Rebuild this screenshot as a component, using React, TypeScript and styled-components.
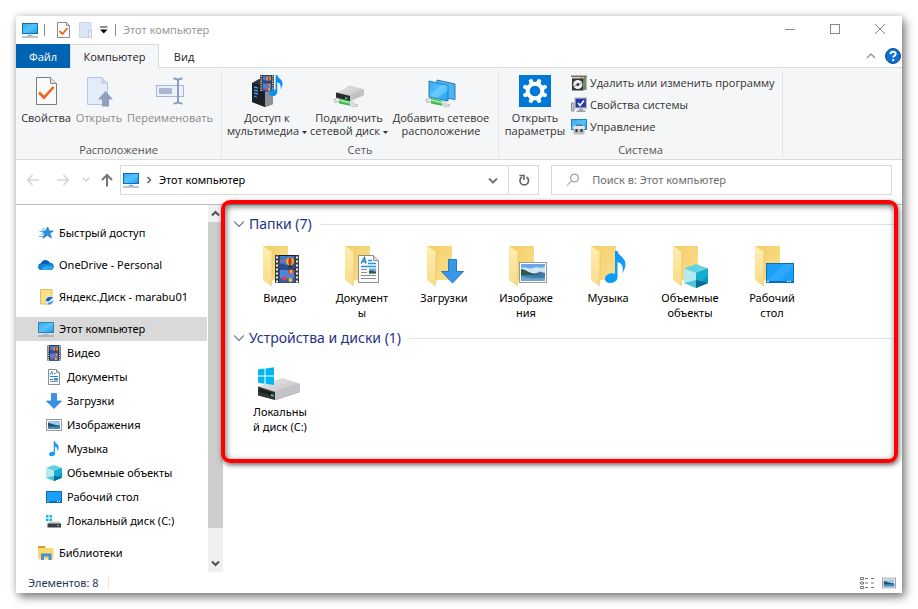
import React from "react";
import styled, { createGlobalStyle } from "styled-components";

const GlobalStyle = createGlobalStyle`
  * { box-sizing: border-box; }
  body { margin: 0; background: #fff; }
  button, input { font: inherit; color: inherit; }
`;

/* ---------- layout ---------- */

const Page = styled.div`
  min-height: 100vh;
  padding: 16px;
  display: flex;
  font: 11px/16px "Noto Sans", "Open Sans", sans-serif;
  color: #000;
`;

const Window = styled.div`
  flex: 1;
  min-width: 0;
  display: flex;
  flex-direction: column;
  background: #fff;
  box-shadow: 3px 4px 9px rgba(0, 0, 0, 0.5), 0 0 7px rgba(0, 0, 0, 0.12);
`;

const PlainButton = styled.button`
  border: 0;
  padding: 0;
  background: transparent;
  display: flex;
  align-items: center;
  justify-content: center;
`;

const TitleBar = styled.header`
  display: flex;
  align-items: center;
  height: 28px;
  padding-left: 6px;
`;

const QuickTools = styled.div`
  display: flex;
  align-items: center;
  gap: 6px;
`;

const QuickButton = styled(PlainButton)<{ $width?: number }>`
  width: ${(p) => p.$width ?? 16}px;
  height: 20px;
`;

const Rule = styled.span<{ $pale?: boolean; $after?: number }>`
  width: 1px;
  height: 12px;
  margin-right: ${(p) => p.$after ?? 0}px;
  background: ${(p) => (p.$pale ? "#e3e3e3" : "#8c8c8c")};
`;

const Title = styled.h1`
  flex: 1;
  margin: 0 0 0 7px;
  font-size: inherit;
  font-weight: 400;
  color: #999;
`;

const CaptionButton = styled(PlainButton)`
  width: 45px;
  height: 24px;
`;

const TabBar = styled.div`
  display: flex;
  height: 24px;
  border-bottom: 1px solid #dadbdc;
`;

const Tab = styled.button<{ $kind: "file" | "active" | "idle"; $width: number }>`
  width: ${(p) => p.$width}px;
  height: 24px;
  padding: 0;
  border: 1px solid ${(p) => (p.$kind === "active" ? "#dadbdc" : "transparent")};
  border-bottom: 0;
  background: ${(p) => (p.$kind === "file" ? "#0063b1" : p.$kind === "active" ? "#f5f6f7" : "transparent")};
  font-family: "Open Sans", sans-serif;
  color: ${(p) => (p.$kind === "file" ? "#fff" : "#222")};
`;

const TabTools = styled.div`
  margin-left: auto;
  display: flex;
  align-items: center;
  gap: 9px;
  padding-right: 1px;
`;

const Ribbon = styled.div`
  display: flex;
  padding: 2px 0;
  background: #f5f6f7;
  border-bottom: 1px solid #dadbdc;
  font-family: "Open Sans", sans-serif;
`;

const Group = styled.section<{ $width: number }>`
  width: ${(p) => p.$width}px;
  height: 87px;
  display: flex;
  flex-direction: column;
  justify-content: space-between;
  border-right: 1px solid #e2e3e4;
  padding: 2px 3px 0;
`;

const GroupBody = styled.div`
  display: flex;
`;

const GroupName = styled.h2`
  margin: 0;
  font-size: inherit;
  line-height: 14px;
  font-weight: 400;
  text-align: center;
  color: #555;
`;

const BigButton = styled.button<{ $width: number }>`
  width: ${(p) => p.$width}px;
  padding: 3px 0 0;
  border: 0;
  background: transparent;
  display: flex;
  flex-direction: column;
  align-items: center;
  gap: 4px;
  line-height: 13px;
  white-space: pre;
  color: #333;
  &:disabled { color: #8a8a8a; }
`;

const SmallButtons = styled.div`
  display: flex;
  flex-direction: column;
  padding-left: 3px;
`;

const SmallButton = styled.button`
  display: flex;
  align-items: center;
  gap: 3px;
  height: 22px;
  padding: 0;
  border: 0;
  background: transparent;
  white-space: nowrap;
  color: #333;
`;

const NavBar = styled.div`
  display: flex;
  padding: 5px 10px 9px 2px;
  border-bottom: 1px solid #b9b9b9;
`;

const NavButton = styled(PlainButton)<{ $width: number }>`
  width: ${(p) => p.$width}px;
  height: 30px;
`;

const Address = styled.div`
  flex: 1;
  height: 30px;
  display: flex;
  align-items: center;
  border: 1px solid #d9d9d9;
  padding-left: 2px;
`;

const Crumb = styled(PlainButton)`
  flex: 1;
  justify-content: flex-start;
  gap: 7px;
`;

const AddressButton = styled(PlainButton)<{ $edge?: boolean }>`
  width: 30px;
  height: 28px;
  border-left: ${(p) => (p.$edge ? "1px solid #d9d9d9" : "0")};
`;

const Search = styled.label`
  width: 39%;
  height: 30px;
  margin-left: 12px;
  display: flex;
  align-items: center;
  gap: 12px;
  border: 1px solid #d9d9d9;
  padding-left: 14px;
`;

const SearchInput = styled.input`
  flex: 1;
  min-width: 0;
  border: 0;
  padding: 0;
  outline: 0;
  background: transparent;
  &::placeholder { color: #6d6d6d; opacity: 1; }
`;

const Main = styled.div`
  flex: 1;
  display: flex;
`;

const Tree = styled.nav`
  width: 191px;
  padding: 16px 0 7px;
`;

const TreeList = styled.ul`
  list-style: none;
  margin: 0;
  padding: 0;
`;

const TreeItem = styled.li<{ $spaced?: boolean }>`
  margin-bottom: ${(p) => (p.$spaced ? 8 : 0)}px;
`;

const TreeLink = styled.a<{ $child?: boolean; $selected?: boolean }>`
  display: flex;
  align-items: center;
  gap: 5px;
  height: 24px;
  padding-left: ${(p) => (p.$child ? 30 : 22)}px;
  background: ${(p) => (p.$selected ? "#d9d9d9" : "transparent")};
  color: #000;
  text-decoration: none;
  white-space: nowrap;
`;

const ScrollBar = styled.div`
  width: 15px;
  margin-left: 1px;
  display: flex;
  flex-direction: column;
  background: #f0f0f0;
`;

const ScrollButton = styled(PlainButton)`
  height: 17px;
`;

const ScrollTrack = styled.div`
  flex: 1;
`;

const ScrollThumb = styled.div`
  height: 92%;
  background: #cdcdcd;
`;

const Content = styled.main`
  flex: 1;
  min-width: 0;
`;

const Highlight = styled.div`
  position: relative;
  margin-right: 4px;
  padding: 6px 4px 29px 11px;
  &::after {
    content: "";
    position: absolute;
    inset: -5px 0 0 -2px;
    border: 4px solid #fe0000;
    border-radius: 9px;
    box-shadow: 1px 2px 5px rgba(0, 0, 0, 0.6), inset 1px 2px 6px rgba(0, 0, 0, 0.6);
    pointer-events: none;
  }
`;

const FileGroup = styled.section`
  & + & { margin-top: 5px; }
`;

const FileHeading = styled.h2`
  display: flex;
  align-items: center;
  gap: 5px;
  height: 26px;
  margin: 0 0 3px;
  font-size: 14px;
  font-weight: 400;
  color: #1e3287;
  white-space: nowrap;
  &::after {
    content: "";
    flex: 1;
    height: 1px;
    margin-left: 3px;
    background: #e2e2e2;
  }
`;

const FileGrid = styled.div`
  display: grid;
  grid-template-columns: repeat(auto-fill, 82px);
  padding-left: 5px;
`;

const FileTile = styled.button`
  height: 80px;
  padding: 0;
  border: 0;
  background: transparent;
  display: flex;
  flex-direction: column;
  align-items: center;
  gap: 2px;
  line-height: 15px;
  text-align: center;
  white-space: pre;
`;

const StatusBar = styled.footer`
  height: 21px;
  display: flex;
  align-items: center;
  gap: 9px;
  padding: 0 6px 0 12px;
  color: #1e395b;
`;

const ViewButtons = styled.div`
  margin-left: auto;
  display: flex;
  gap: 6px;
`;

/* ---------- icons ---------- */

const DefsSvg = styled.svg`
  position: absolute;
`;

const Defs = () => (
  <DefsSvg width="0" height="0" aria-hidden="true">
    <defs>
      <linearGradient id="screen" x1="0" y1="0" x2="1" y2="1">
        <stop offset="0" stopColor="#36a7ee" />
        <stop offset=".5" stopColor="#55c2fb" />
        <stop offset="1" stopColor="#1c9af0" />
      </linearGradient>
      <linearGradient id="folderBack" x1="0" y1="0" x2="1" y2="1">
        <stop offset="0" stopColor="#f3cf69" />
        <stop offset="1" stopColor="#fbdf8c" />
      </linearGradient>
      <linearGradient id="folderFront" x1="0" y1="0" x2="0" y2="1">
        <stop offset="0" stopColor="#ffedb0" />
        <stop offset="1" stopColor="#f9dc88" />
      </linearGradient>
      <linearGradient id="metal" x1="0" y1="0" x2="1" y2="1">
        <stop offset="0" stopColor="#e9e9ea" />
        <stop offset="1" stopColor="#c0c1c4" />
      </linearGradient>
    </defs>
  </DefsSvg>
);

type IconProps = { w: number; h?: number; box: string; children: React.ReactNode };
const Icon = ({ w, h = w, box, children }: IconProps) => (
  <svg width={w} height={h} viewBox={box} fill="none" aria-hidden="true">
    {children}
  </svg>
);

const MonitorIcon = ({ bright = false }: { bright?: boolean }) => (
  <Icon w={16} box="0 0 16 16">
    <rect x=".5" y="1.5" width="15" height="10" fill="url(#screen)" stroke={bright ? "#0b6fb5" : "#3a7fae"} />
    <path d="M5.5 13.5h5" stroke="#8db4d4" />
    <path d="M0 15h16" stroke="#8a9fb2" strokeWidth="1.2" />
    <path d="M7 12h2v1H7z" fill="#c4d6e6" />
  </Icon>
);

const PageCheckIcon = () => (
  <Icon w={13} h={16} box="0 0 13 16">
    <path d="M.5.5h9l3 3v12H.5z" fill="#fafafa" stroke="#8a8a8a" />
    <path d="M9.5.5v3h3" fill="#ddd" stroke="#8d8d8d" />
    <path d="M2.500 9l3 3 5-6" stroke="#f2611c" strokeWidth="1.800" />
  </Icon>
);

const PropertiesIcon = () => (
  <Icon w={32} box="0 0 32 32">
    <path d="M6.500 2.500h14l6 6v21h-20z" fill="#fafafa" stroke="#7d7d7d" />
    <path d="M20.500 2.500v6h6" fill="#ddd" stroke="#8d8d8d" />
    <path d="M9 17.500l5 5 9.500-10.500" stroke="#f2611c" strokeWidth="2.600" />
  </Icon>
);

const BlankDoc = () => (
  <Icon w={13} h={16} box="0 0 13 16">
    <path d="M.5.500h11.500V10h-2v5.500H.5z" fill="#dbe5f5" stroke="#c9d6ec" />
    <path d="M9.500 8.500h3v7h-3z" fill="#e8eefa" stroke="#bccbe3" />
  </Icon>
);

const OpenIcon = () => (
  <Icon w={28} h={32} box="0 0 28 32">
    <path d="M2.500 2.500h14.500l5.500 5.500v21.500h-20z" fill="#e4ecf9" stroke="#b7c6e0" />
    <path d="M17 2.500V8h5.500" fill="#cdd9ee" stroke="#b7c6e0" />
    <path d="M20.500 16l7.500 8.500h-4V31.500h-7v-7h-4z" fill="#8f9fc0" />
  </Icon>
);

const RenameIcon = () => (
  <Icon w={30} h={32} box="0 0 30 32">
    <rect x="1.500" y="10.500" width="27" height="11" fill="#eaf0fa" stroke="#a5b5d4" />
    <rect x="4" y="13" width="13" height="6" fill="#a9b7d3" />
    <path d="M18.500 3.500c3 0 4.500.5 4.500 2.500v20c0 2-1.500 2.500-4.500 2.500M27.500 3.500c-3 0-4.500.5-4.500 2.500v20c0 2 1.500 2.500 4.500 2.500" stroke="#8d9dbf" strokeWidth="2" />
  </Icon>
);

const NotePath = ({ fill = "#0f8ff0" }: { fill?: string }) => (
  <path d="M10 0h2.500c.6 4.500 8 6.500 8 13 0 3-1.200 6-3.200 9.500C18.500 17 18 12.500 12.500 11v15c0 3.500-3.200 6-7 6S0 30.500 0 27.800c0-3 3.200-5.500 7-5.500 1.200 0 2.200.2 3 .6z" fill={fill} />
);

const FilmArt = () => (
  <>
    <rect width="24" height="28" fill="#3c3a3b" />
    <rect x="4" width="16" height="28" fill="#111b38" />
    <rect x="4.500" y="1" width="15" height="12.500" fill="#3d78d0" />
    <rect x="4.500" y="14.500" width="15" height="13" fill="#4c86d9" />
    <path d="M4.500 9c2-2 4 2 8 0s5 1 7 0v4.500h-15z" fill="#254c9a" />
    <path d="M5 7c2-3 5 0 6-2" stroke="#d3568d" strokeWidth="1.500" />
    <circle cx="15" cy="6.500" r="4" fill="#f0ad20" />
    <path d="M14 2.800c-.8 3-.8 5 0 7.400h2c.8-2.400.8-4.400 0-7.400" fill="#b7352b" />
    <path d="M13.500 10.500h3v2h-3z" fill="#402a10" />
    <path d="M12.500 15h7l-3 5h-1.500z" fill="#e23d30" />
    <path d="M15 15h2l-.5 4h-1z" fill="#ffd23c" />
    <path d="M4.500 24c3-2 5 1 15-1v4.500h-15z" fill="#315caa" />
    <circle cx="9.500" cy="23.500" r="2.200" fill="#e84335" />
    <circle cx="15.500" cy="25" r="2" fill="#f5c331" />
    <path d="M2 1.500v26M22 1.500v26" stroke="#f1f1f1" strokeWidth="2" strokeDasharray="2 2" />
  </>
);

const MediaIcon = () => (
  <Icon w={32} box="0 0 32 32">
    <path d="M1 8l7-4 14 3v22l-8 3L1 27z" fill="#33363b" />
    <path d="M14 11l8-3v21l-8 3z" fill="#8d9096" />
    <path d="M1 8l13 3v21L1 27z" fill="#1d2024" />
    <path d="M3 12l4 1M3 15l4 1M3 18l4 1M3 21l3 1" stroke="#3d9cf0" strokeWidth="1.300" />
    <g transform="translate(9 0) scale(.58)"><FilmArt /></g>
    <g transform="translate(18 0) scale(.66)"><NotePath /></g>
  </Icon>
);

const Cable = () => (
  <>
    <path d="M1 24.500l5-1.500 1 3-5 1.500zM20 28.500l5 1.500-1.500 2-5-1z" fill="#ececec" stroke="#a7a7a7" strokeWidth=".8" />
    <path d="M6 23l12 3v5L6 28.500z" fill="#46b95a" />
    <path d="M6 25l12 3" stroke="#9ff0a8" strokeWidth="1.500" />
    <path d="M17 26h4v5.500h-4z" fill="#d9dadb" />
  </>
);

const NetDriveIcon = () => (
  <Icon w={32} box="0 0 32 32">
    <Cable />
    <path d="M3 18.500L17 11l14 3.500v5.500l-13 5.500L3 22.500z" fill="#8b8d90" />
    <path d="M3 17.500L18 11l13 3.500-14 6.500z" fill="url(#metal)" />
    <path d="M3 17.500L17 21v5L3 22.500z" fill="#2b2c2e" />
    <path d="M17 21l14-6.500V20l-14 6z" fill="#c1c3c6" />
    <path d="M12 23l2.500.6" stroke="#44e070" strokeWidth="1.500" />
  </Icon>
);

const NetPlaceIcon = () => (
  <Icon w={32} box="0 0 32 32">
    <path d="M12 5l18 4v15.500l-18-3z" fill="#4bb5f5" stroke="#237cb5" />
    <Cable />
    <path d="M4 6l19 4.500V26L4 22z" fill="url(#screen)" stroke="#2580b8" />
    <path d="M5 20L17 9.500l5.500 1.300V16L12 23z" fill="#7fd0ff" opacity=".45" />
  </Icon>
);

const SettingsIcon = () => (
  <Icon w={32} box="0 0 32 32">
    <rect width="32" height="32" fill="#0078d7" />
    <circle cx="16" cy="16" r="7.300" stroke="#fff" strokeWidth="4" />
    {[0, 45, 90, 135, 180, 225, 270, 315].map((a) => (
      <path key={a} d="M13.500 8l.8-4.500h3.400l.8 4.500z" fill="#fff" transform={`rotate(${a + 22.500} 16 16)`} />
    ))}
  </Icon>
);

const UninstallIcon = () => (
  <Icon w={16} box="0 0 16 16">
    <path d="M1 1h14v14H1z" fill="#d4d1be" />
    <path d="M0 .5h16v1.500H0z" fill="#6f716d" />
    <path d="M9 2l6 1v6l-5-2z" fill="#d8a95a" />
    <path d="M13 2h2.500v13H13z" fill="#6f8c6e" />
    <rect x="1" y="3.500" width="11.500" height="12" fill="#34363a" />
    <circle cx="6.800" cy="9.500" r="4.600" fill="#f2f3f4" />
    <path d="M6.800 9.500l3.500-3 .8 3zM6.800 9.500l-3.300 3-.8-3z" fill="#b8bfc6" />
    <circle cx="6.800" cy="9.500" r="1.500" fill="#34363a" />
  </Icon>
);

const SystemIcon = () => (
  <Icon w={16} box="0 0 16 16">
    <path d="M.5 6h2.500v8H.5z" fill="#c9cccd" stroke="#85898c" />
    <rect x="4" y="1" width="11.500" height="10" fill="#2338a5" stroke="#b8babd" strokeWidth="1.300" />
    <path d="M7 6l2 2.500 4-5" stroke="#fff" strokeWidth="1.600" />
    <path d="M8 12h4v1.500h2.500V15h-9v-1.500H8z" fill="#9b9ea1" />
  </Icon>
);

const ManageIcon = () => (
  <Icon w={16} box="0 0 16 16">
    <rect x=".5" y=".5" width="15" height="10" fill="url(#screen)" stroke="#2a84bd" />
    <path d="M5.500 7V6h5v1" stroke="#555" />
    <rect x="2.500" y="7" width="11" height="8.500" rx="1" fill="#b9bec3" />
    <rect x="2.500" y="7" width="11" height="3" fill="#e6e8ea" />
    <path d="M4.500 10h2v3h-2zM9.500 10h2v3h-2z" fill="#333" />
  </Icon>
);

const StarIcon = () => (
  <Icon w={16} box="0 0 16 16">
    <path d="M9.800 2l1.300 4 4.200-.1-3.400 2.500 1.600 4.600-4.200-2.700-4.300 2.900 1.700-4.600L3.500 6h4z" fill="#2493e6" stroke="#1473bd" strokeWidth=".7" />
    <path d="M4 4h3M1.500 6.500h4M3 9h3M1 11.500h4" stroke="#6cb9ee" />
  </Icon>
);

const CloudIcon = () => (
  <Icon w={16} box="0 0 16 16">
    <path d="M3.500 13a3.400 3.400 0 0 1-.6-6.700A5 5 0 0 1 12 5.700 3.700 3.700 0 0 1 12.500 13z" fill="#0a5fb5" />
    <path d="M3.500 13a3.300 3.300 0 0 1-3-4.700C4 6 9 8 12 5.700 17 6 17 13 12.500 13z" fill="#1481d7" />
    <path d="M3 13c2-4 5-5.500 8.500-4C15 8 17 12 13 13z" fill="#2ba6ef" />
  </Icon>
);

const YandexIcon = () => (
  <Icon w={16} box="0 0 16 16">
    <path d="M2.500.5h11.500v14.500H2.500z" fill="#fce08c" stroke="#e6bd52" />
    <circle cx="12" cy="11.500" r="4.500" fill="#eaf2fb" />
    <path d="M7.500 12c1-4 5-5.500 8-3-2.500 0-3 2.500-5 3.500z" fill="#1763b8" />
    <path d="M9 15c3 1.500 6-.5 6.500-4-2 2-4 2-6.500 4z" fill="#2c98ea" />
  </Icon>
);

const FilmIcon = () => (
  <Icon w={16} box="-2 -.500 28 29"><FilmArt /></Icon>
);

const DocArt = () => (
  <>
    <path d="M.5.500h15l5 5v22H.5z" fill="#fbfbfb" stroke="#8e8e8e" />
    <path d="M15.500.500v5h5" fill="#ddd" stroke="#8e8e8e" />
    <path d="M3 8.500l3.500-6 1.500 6M4.500 6.500h3" stroke="#1c7cc8" strokeWidth="1.300" />
    <path d="M10 5.500h4M10 8.500h8M3 11.500h15" stroke="#2196e8" strokeWidth="1.300" />
    <path d="M3 14.500h6M3 17.500h6M3 20.500h15M3 23.500h15" stroke="#8f8f8f" />
    <path d="M11 13.500h7v5h-7z" fill="#6aa9e0" />
    <path d="M11 16l3-.5 4 1.500v1.500h-7z" fill="#355c4a" />
  </>
);

const DocIcon = () => (
  <Icon w={16} box="0 0 16 16">
    <path d="M2.500.5h8l3 3v12h-11z" fill="#fbfbfb" stroke="#8e8e8e" />
    <path d="M10.500.5v3h3" fill="#ddd" stroke="#8e8e8e" />
    <path d="M4 5.500l2-3 .5 3M8 4.500h1.500M4 7.500h8M4 10.500h3" stroke="#1c88dc" />
    <path d="M4 12.500h8" stroke="#8c9aa8" />
    <path d="M8 9h4v2.500H8z" fill="#3f8fcf" />
  </Icon>
);

const ArrowIcon = () => (
  <Icon w={16} box="0 0 16 16">
    <path d="M5.500.5h5V8h5L8 15.500.5 8h5z" fill="#3494e6" stroke="#2778c2" strokeWidth=".7" />
  </Icon>
);

const PictureArt = () => (
  <>
    <rect x=".5" y=".5" width="27" height="20" fill="#fff" stroke="#9a9a9a" />
    <rect x="2" y="2" width="24" height="17" fill="#6fa8e8" />
    <path d="M2 6c6-2 8 2 12 0s8 1 12-1v6H2z" fill="#d4e6f5" />
    <path d="M2 7c4 0 7 3.500 13 5h11v1.500H2z" fill="#2d5b45" />
    <path d="M15 12l6-2.500 5 1.500v2z" fill="#56779d" />
    <path d="M2 13h24v6H2z" fill="#3b7db4" />
    <path d="M2 14c5 1 7 3 24 2v3H2z" fill="#8cc1d9" opacity=".6" />
  </>
);

const PictureIcon = ({ size = 16 }: { size?: number }) => (
  <Icon w={size} box="0 0 16 16">
    <rect x=".5" y="2.500" width="15" height="11" fill="#fff" stroke="#9a9a9a" />
    <rect x="2" y="4" width="12" height="8" fill="#9cc9f0" />
    <path d="M2 6c3 0 5 2 12 2.500V10H2z" fill="#27505c" />
    <path d="M2 9.500h12V12H2z" fill="#3f8cc4" />
  </Icon>
);

const MusicIcon = () => (
  <Icon w={16} box="-6.500 -.500 34 34"><NotePath fill="#0c9bfa" /></Icon>
);

const CubeArt = () => (
  <>
    <path d="M12 0l12 4.500L12 9 0 4.500z" fill="#5fd3e0" />
    <path d="M0 4.500L12 9v15L0 19z" fill="#b4e9f0" />
    <path d="M24 4.500L12 9v15l12-5z" fill="#0099c4" />
    <path d="M12 9l12-4.500V11L12 24z" fill="#17acd2" />
    <path d="M12 24V16l12 3z" fill="#006c96" />
    <path d="M0 19l12-3v8z" fill="#4fc4d6" />
  </>
);

const CubeIcon = () => (
  <Icon w={16} box="0 0 24 24"><CubeArt /></Icon>
);

const DesktopArt = () => (
  <>
    <rect x=".5" y=".5" width="27" height="19" fill="#18a0fb" stroke="#0b6fb8" />
    <path d="M1 17L18 1h9v4L11 19H1z" fill="#3fb0ff" opacity=".5" />
    <path d="M1 18.500h26" stroke="#0b6fb8" />
    <path d="M1 18.500h2M21 18.500h1.500M23.500 18.500H25" stroke="#fff" />
  </>
);

const DesktopIcon = () => (
  <Icon w={16} box="0 0 16 16">
    <rect x=".5" y="2.500" width="15" height="11" fill="#18a0fb" stroke="#0b6fb8" />
    <path d="M1 12.500h14" stroke="#0b6fb8" />
    <path d="M11 12.500h1M13 12.500h1M1.500 12.500h1" stroke="#fff" />
  </Icon>
);

const DriveSmallIcon = () => (
  <Icon w={16} box="0 0 16 16">
    <path d="M0 2h2.500v2.500H0zM3.500 2H6v2.500H3.500zM0 5.500h2.500V8H0zM3.500 5.500H6V8H3.500z" fill="#12b5ee" />
    <path d="M4 8.500h9l2 2.500H1.500z" fill="#c9cbcd" />
    <rect x="1.500" y="10.500" width="13.500" height="4" fill="#3b3d40" />
    <path d="M11 12.500h2" stroke="#45df70" />
  </Icon>
);

const LibraryIcon = () => (
  <Icon w={16} box="0 0 16 16">
    <path d="M0 1h6.500l1 2H15.500v11.500H0z" fill="#fbd86f" />
    <path d="M0 1h6.500l1 2H0z" fill="#d79a2b" />
    <path d="M3 15V8.500h10.500V15h-3v-3.500H6V15z" fill="#3f92de" />
  </Icon>
);

const Folder = ({ children }: { children: React.ReactNode }) => (
  <Icon w={48} box="0 0 48 48">
    <path d="M7 6h25v34H7z" fill="url(#folderBack)" />
    <path d="M7 6l9 6v28l-1 6-8-6z" fill="url(#folderFront)" />
    <path d="M16 12v28l-1 6" stroke="#e8c060" strokeWidth=".7" />
    {children}
  </Icon>
);

const DriveIcon = () => (
  <Icon w={48} box="0 0 48 48">
    <path d="M2 33L26 24.500l18 5.500v8L20 46 2 41z" fill="#9c9ea1" />
    <path d="M2 32.500l24-8 18 5.500-25 8z" fill="url(#metal)" />
    <path d="M19 38l25-8v7.500L19 46z" fill="#c2c4c7" />
    <path d="M2 32.500L19 38v8L2 41.500z" fill="#303236" />
    <path d="M4 35l13.500 4v3L4 38z" fill="#17191b" />
    <path d="M15 40l2.500.7v2L15 42z" fill="#3fdf63" />
    <path d="M2 15.500l6.500-1v7H2zM9.500 14.400l8.500-1.200v8.300H9.500zM2 22.500h6.500v7.300l-6.500-1zM9.500 22.500H18v8.400l-8.500-1.200z" fill="#00b7f1" />
  </Icon>
);

const Arrow = ({ d, color, width = 2 }: { d: string; color: string; width?: number }) => (
  <Icon w={14} box="0 0 14 14">
    <path d={d} stroke={color} strokeWidth={width} />
  </Icon>
);

const SectionChevron = () => (
  <Icon w={10} box="0 0 10 10">
    <path d="M0 2.500l5 5 5-5" stroke="#777" strokeWidth="1.200" />
  </Icon>
);

const CaretSvg = styled.svg`
  vertical-align: middle;
  margin-left: 3px;
`;

const Caret = () => (
  <CaretSvg width="5" height="3" viewBox="0 0 5 3" aria-hidden="true">
    <path d="M0 0h5L2.500 3z" fill="#333" />
  </CaretSvg>
);

const HelpIcon = () => (
  <Icon w={16} box="0 0 16 16">
    <circle cx="8" cy="8" r="7.500" fill="#0f70cf" stroke="#0a4f9a" />
    <path d="M5.500 6.200c0-3.200 5.200-3.100 5.200-.3 0 1.900-2.500 1.900-2.500 3.700M8.200 11v2" stroke="#fff" strokeWidth="1.900" />
  </Icon>
);

/* ---------- data ---------- */

const tree = [
  { name: "Быстрый доступ", icon: <StarIcon />, spaced: true },
  { name: "OneDrive - Personal", icon: <CloudIcon />, spaced: true },
  { name: "Яндекс.Диск - marabu01", icon: <YandexIcon />, spaced: true },
  { name: "Этот компьютер", icon: <MonitorIcon />, selected: true },
  { name: "Видео", icon: <FilmIcon />, child: true },
  { name: "Документы", icon: <DocIcon />, child: true },
  { name: "Загрузки", icon: <ArrowIcon />, child: true },
  { name: "Изображения", icon: <PictureIcon />, child: true },
  { name: "Музыка", icon: <MusicIcon />, child: true },
  { name: "Объемные объекты", icon: <CubeIcon />, child: true },
  { name: "Рабочий стол", icon: <DesktopIcon />, child: true },
  { name: "Локальный диск (C:)", icon: <DriveSmallIcon />, child: true, spaced: true },
  { name: "Библиотеки", icon: <LibraryIcon /> },
];

const folders = [
  { name: "Видео", art: <g transform="translate(19 15)"><FilmArt /></g> },
  { name: "Документ\nы", art: <g transform="translate(20 15)"><DocArt /></g> },
  { name: "Загрузки", art: <path d="M28.500 19.500h8v12h7L32.500 43 21.500 31.500h7z" fill="#3797e8" stroke="#2979c2" /> },
  { name: "Изображе\nния", art: <g transform="translate(17 22)"><PictureArt /></g> },
  { name: "Музыка", art: <g transform="translate(21 11)"><NotePath fill="#0c9bfa" /></g> },
  { name: "Объемные\nобъекты", art: <g transform="translate(18 24)"><CubeArt /></g> },
  { name: "Рабочий\nстол", art: <g transform="translate(18 23)"><DesktopArt /></g> },
];

/* ---------- page ---------- */

export default function App() {
  return (
    <Page>
      <GlobalStyle />
      <Defs />
      <Window>
        <TitleBar>
          <QuickTools>
            <MonitorIcon bright />
            <Rule $after={4} />
            <QuickButton aria-label="Свойства"><PageCheckIcon /></QuickButton>
            <QuickButton aria-label="Новая папка"><BlankDoc /></QuickButton>
            <QuickButton $width={10} aria-label="Настройка панели">
              <Icon w={8} box="0 0 8 8"><path d="M0 1h7.500" stroke="#222" /><path d="M0 3.500h7.500L3.800 7.500z" fill="#000" /></Icon>
            </QuickButton>
            <Rule />
          </QuickTools>
          <Title>Этот компьютер</Title>
          <CaptionButton aria-label="Свернуть"><Icon w={12} box="0 0 12 12"><path d="M1 5.500h10" stroke="#888" /></Icon></CaptionButton>
          <CaptionButton aria-label="Развернуть"><Icon w={12} box="0 0 12 12"><rect x="1.500" y=".5" width="9" height="9" stroke="#888" /></Icon></CaptionButton>
          <CaptionButton aria-label="Закрыть"><Icon w={12} box="0 0 12 12"><path d="M1 0l10 10M11 0L1 10" stroke="#888" /></Icon></CaptionButton>
        </TitleBar>

        <TabBar>
          <Tab $kind="file" $width={54}>Файл</Tab>
          <Tab $kind="active" $width={89}>Компьютер</Tab>
          <Tab $kind="idle" $width={50}>Вид</Tab>
          <TabTools>
            <PlainButton aria-label="Свернуть ленту"><Icon w={10} box="0 0 10 10"><path d="M1 7l4-4 4 4" stroke="#999" strokeWidth="1.500" /></Icon></PlainButton>
            <PlainButton aria-label="Справка"><HelpIcon /></PlainButton>
          </TabTools>
        </TabBar>

        <Ribbon>
          <Group $width={206}>
            <GroupBody>
              <BigButton $width={54}><PropertiesIcon />Свойства</BigButton>
              <BigButton $width={52} disabled><OpenIcon />Открыть</BigButton>
              <BigButton $width={90} disabled><RenameIcon />Переименовать</BigButton>
            </GroupBody>
            <GroupName>Расположение</GroupName>
          </Group>
          <Group $width={277}>
            <GroupBody>
              <BigButton $width={84}><MediaIcon /><span>Доступ к{"\n"}мультимедиа<Caret /></span></BigButton>
              <BigButton $width={80}><NetDriveIcon /><span>Подключить{"\n"}сетевой диск<Caret /></span></BigButton>
              <BigButton $width={104}><NetPlaceIcon /><span>Добавить сетевое{"\n"}расположение</span></BigButton>
            </GroupBody>
            <GroupName>Сеть</GroupName>
          </Group>
          <Group $width={284}>
            <GroupBody>
              <BigButton $width={66}><SettingsIcon /><span>Открыть{"\n"}параметры</span></BigButton>
              <SmallButtons>
                <SmallButton><UninstallIcon />Удалить или изменить программу</SmallButton>
                <SmallButton><SystemIcon />Свойства системы</SmallButton>
                <SmallButton><ManageIcon />Управление</SmallButton>
              </SmallButtons>
            </GroupBody>
            <GroupName>Система</GroupName>
          </Group>
        </Ribbon>

        <NavBar>
          <NavButton $width={30} aria-label="Назад"><Arrow d="M13 7H1.500M6.500 2l-5 5 5 5" color="#d5d5d5" width={1.500} /></NavButton>
          <NavButton $width={30} aria-label="Вперед"><Arrow d="M1 7h11.500M7.500 2l5 5-5 5" color="#d5d5d5" width={1.500} /></NavButton>
          <NavButton $width={16} aria-label="Последние расположения"><Arrow d="M4 5l3 3 3-3" color="#d0d0d0" width={1.500} /></NavButton>
          <NavButton $width={26} aria-label="Вверх"><Arrow d="M7 13.500V2M2 7l5-5 5 5" color="#777" /></NavButton>
          <Address>
            <Crumb>
              <MonitorIcon bright />
              <Icon w={6} h={8} box="0 0 6 8"><path d="M1.500 1l3 3-3 3" stroke="#666" strokeWidth="1.600" /></Icon>
              <span>Этот компьютер</span>
            </Crumb>
            <AddressButton aria-label="Предыдущие расположения"><Arrow d="M3 5.500l4 4 4-4" color="#777" /></AddressButton>
            <AddressButton $edge aria-label="Обновить"><Icon w={14} box="0 0 14 14"><path d="M9.500 4a4.300 4.300 0 1 1-4.500 0" stroke="#666" strokeWidth="1.700" /><path d="M2.500 2.500H7V7" stroke="#666" strokeWidth="1.600" /></Icon></AddressButton>
          </Address>
          <Search>
            <Icon w={14} box="0 0 14 14"><circle cx="8.500" cy="5" r="4" stroke="#888" /><path d="M5.500 8L1 12.500" stroke="#888" /></Icon>
            <SearchInput aria-label="Поиск" placeholder="Поиск в: Этот компьютер" />
          </Search>
        </NavBar>

        <Main>
          <Tree aria-label="Область навигации">
            <TreeList>
              {tree.map((t) => (
                <TreeItem key={t.name} $spaced={t.spaced}>
                  <TreeLink href="#" $child={t.child} $selected={t.selected}>{t.icon}{t.name}</TreeLink>
                </TreeItem>
              ))}
            </TreeList>
          </Tree>
          <ScrollBar>
            <ScrollButton aria-label="Прокрутить вверх"><Icon w={9} box="0 0 9 9"><path d="M1 6.500L4.500 3 8 6.500" stroke="#505050" strokeWidth="2" /></Icon></ScrollButton>
            <ScrollTrack><ScrollThumb /></ScrollTrack>
            <ScrollButton aria-label="Прокрутить вниз"><Icon w={9} box="0 0 9 9"><path d="M1 2.500L4.500 6 8 2.500" stroke="#505050" strokeWidth="2" /></Icon></ScrollButton>
          </ScrollBar>
          <Content>
            <Highlight>
              <FileGroup>
                <FileHeading><SectionChevron />Папки (7)</FileHeading>
                <FileGrid>
                  {folders.map((f) => (
                    <FileTile key={f.name}><Folder>{f.art}</Folder>{f.name}</FileTile>
                  ))}
                </FileGrid>
              </FileGroup>
              <FileGroup>
                <FileHeading><SectionChevron />Устройства и диски (1)</FileHeading>
                <FileGrid>
                  <FileTile><DriveIcon />{"Локальны\nй диск (C:)"}</FileTile>
                </FileGrid>
              </FileGroup>
            </Highlight>
          </Content>
        </Main>

        <StatusBar>
          <span>Элементов: 8</span>
          <Rule $pale />
          <ViewButtons>
            <PlainButton aria-label="Таблица"><Icon w={16} h={14} box="0 0 16 14"><path d="M.5 1.500h3v2h-3zM.5 6h3v2h-3zM.5 10.500h3v2h-3z" stroke="#777" /><path d="M5 2.500h4M11 2.500h4M5 7h4M11 7h4M5 11.500h4M11 11.500h4" stroke="#777" strokeDasharray="3 1" /></Icon></PlainButton>
            <PlainButton aria-label="Крупные значки"><PictureIcon size={14} /></PlainButton>
          </ViewButtons>
        </StatusBar>
      </Window>
    </Page>
  );
}
